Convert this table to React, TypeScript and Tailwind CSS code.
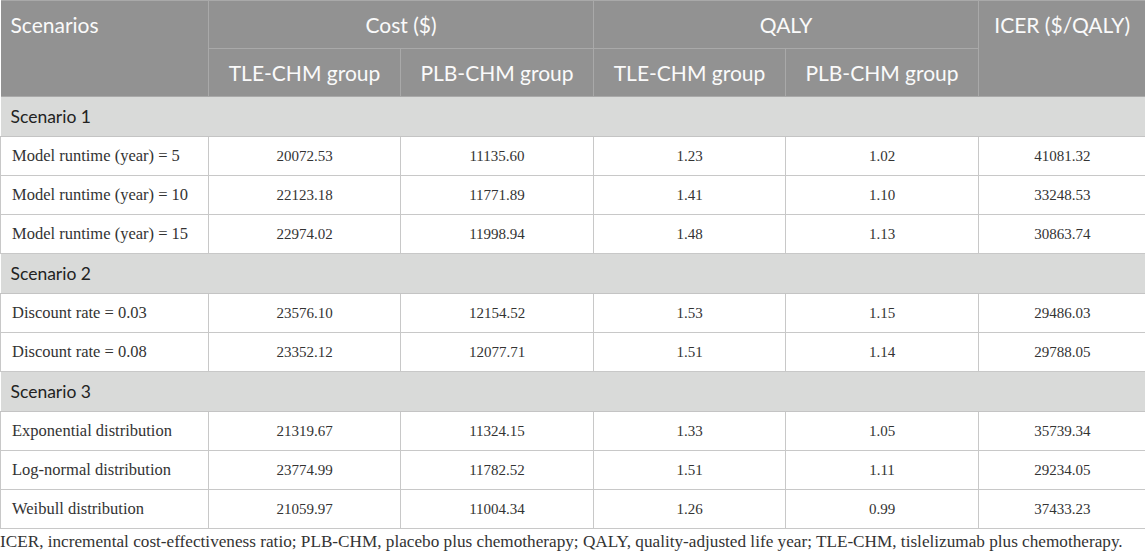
import React from "react";

const rows: (string[] | string)[] = [
  "Scenario 1",
  ["Model runtime (year) = 5", "20072.53", "11135.60", "1.23", "1.02", "41081.32"],
  ["Model runtime (year) = 10", "22123.18", "11771.89", "1.41", "1.10", "33248.53"],
  ["Model runtime (year) = 15", "22974.02", "11998.94", "1.48", "1.13", "30863.74"],
  "Scenario 2",
  ["Discount rate = 0.03", "23576.10", "12154.52", "1.53", "1.15", "29486.03"],
  ["Discount rate = 0.08", "23352.12", "12077.71", "1.51", "1.14", "29788.05"],
  "Scenario 3",
  ["Exponential distribution", "21319.67", "11324.15", "1.33", "1.05", "35739.34"],
  ["Log-normal distribution", "23774.99", "11782.52", "1.51", "1.11", "29234.05"],
  ["Weibull distribution", "21059.97", "11004.34", "1.26", "0.99", "37433.23"],
];

const sans = "font-['Lato','Open_Sans',sans-serif]";

export default function App() {
  return (
    <div className="w-[1145px] h-[553px] bg-white overflow-hidden">
      <table className="w-[1145px] border-collapse table-fixed">
        <colgroup>
          <col className="w-[208px]" />
          <col className="w-[192px]" />
          <col className="w-[193px]" />
          <col className="w-[192px]" />
          <col className="w-[193px]" />
          <col className="w-[167px]" />
        </colgroup>
        <thead className={`${sans} text-[21px] text-[#fafafa] bg-[#929292]`}>
          <tr className="h-[48px]">
            <th rowSpan={2} className="border border-[#a9a9a9] border-l-0 text-left font-normal align-top pl-[10px] pt-[10px] leading-[28px]">
              Scenarios
            </th>
            <th colSpan={2} className="border border-[#a9a9a9] font-normal leading-[28px]">Cost ($)</th>
            <th colSpan={2} className="border border-[#a9a9a9] font-normal leading-[28px]">QALY</th>
            <th rowSpan={2} className="border border-[#a9a9a9] border-r-0 font-normal align-top pt-[10px] leading-[28px]">
              ICER ($/QALY)
            </th>
          </tr>
          <tr className="h-[48px]">
            <th className="border border-[#a9a9a9] font-normal leading-[28px]">TLE-CHM group</th>
            <th className="border border-[#a9a9a9] font-normal leading-[28px]">PLB-CHM group</th>
            <th className="border border-[#a9a9a9] font-normal leading-[28px]">TLE-CHM group</th>
            <th className="border border-[#a9a9a9] font-normal leading-[28px]">PLB-CHM group</th>
          </tr>
        </thead>
        <tbody>
          {rows.map((r, i) =>
            typeof r === "string" ? (
              <tr key={i} className="h-[40px] bg-[#d9dad9]">
                <td colSpan={6} className={`${sans} text-[17.5px] text-[#222] pl-[10px] pt-[2px] border-y border-[#c4c4c4]`}>
                  {r}
                </td>
              </tr>
            ) : (
              <tr key={i} className="h-[39px] font-['Liberation_Serif',serif] text-[#333]">
                {r.map((c, j) => (
                  <td
                    key={j}
                    className={`border border-[#c8c8c8] ${j === 0 ? "text-left pl-[11px] text-[16.5px]" : "text-center text-[15px]"} ${j === 5 ? "border-r-0" : ""}`}
                  >
                    {c}
                  </td>
                ))}
              </tr>
            )
          )}
        </tbody>
      </table>
      <div className="font-['Liberation_Serif',serif] text-[17.2px] text-[#333] mt-[3px] leading-[20px] whitespace-nowrap">
        ICER, incremental cost-effectiveness ratio; PLB-CHM, placebo plus chemotherapy; QALY, quality-adjusted life year; TLE-CHM, tislelizumab plus chemotherapy.
      </div>
    </div>
  );
}
